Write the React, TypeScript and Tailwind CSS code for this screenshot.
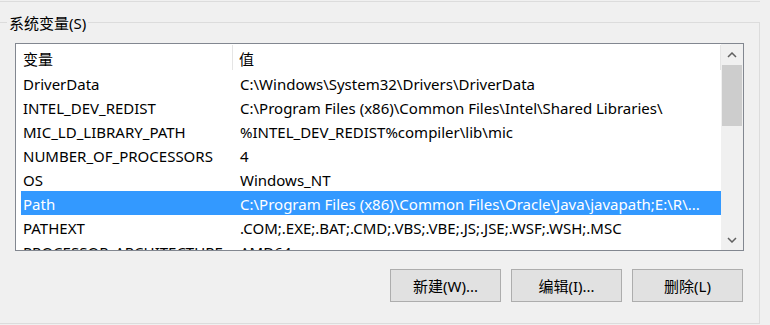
const rows = [
  { name: 'DriverData', value: 'C:\\Windows\\System32\\Drivers\\DriverData' },
  { name: 'INTEL_DEV_REDIST', value: 'C:\\Program Files (x86)\\Common Files\\Intel\\Shared Libraries\\' },
  { name: 'MIC_LD_LIBRARY_PATH', value: '%INTEL_DEV_REDIST%compiler\\lib\\mic' },
  { name: 'NUMBER_OF_PROCESSORS', value: '4' },
  { name: 'OS', value: 'Windows_NT' },
  { name: 'Path', value: 'C:\\Program Files (x86)\\Common Files\\Oracle\\Java\\javapath;E:\\R\\...', selected: true },
  { name: 'PATHEXT', value: '.COM;.EXE;.BAT;.CMD;.VBS;.VBE;.JS;.JSE;.WSF;.WSH;.MSC' },
  { name: 'PROCESSOR_ARCHITECTURE', value: 'AMD64' },
];

function Chevron({ down }: { down?: boolean }) {
  return (
    <svg width="10" height="6" viewBox="0 0 10 6" className="block">
      <path
        d={down ? 'M1 1 L5 5 L9 1' : 'M1 5 L5 1 L9 5'}
        fill="none"
        stroke="#606060"
        strokeWidth="1.5"
      />
    </svg>
  );
}

function Scrollbar() {
  return (
    <div className="flex w-[22px] flex-col bg-[#f0f0f0]">
      <div className="flex h-[21px] items-center justify-center">
        <Chevron />
      </div>
      <div className="mx-[1px] h-[61px] bg-[#cdcdcd]" />
      <div className="flex-1" />
      <div className="flex h-[21px] items-center justify-center">
        <Chevron down />
      </div>
    </div>
  );
}

function VarButton({ label }: { label: string }) {
  return (
    <button className="h-[33px] w-[111px] border border-[#adadad] bg-[#e1e1e1] pt-[1px] text-[15px] text-black">
      {label}
    </button>
  );
}

export default function App() {
  return (
    <div
      className="flex h-[325px] w-[770px] flex-col overflow-hidden bg-[#f0f0f0] text-black"
      style={{ fontFamily: '"Noto Sans", "Noto Sans CJK SC", sans-serif' }}
    >
      <div className="h-[2px] w-[760px] border-b border-[#dcdcdc]" />

      <div className="relative ml-[-1px] mt-[20px] h-[302px] w-[761px] border border-[#dcdcdc]">
        <span className="absolute left-[7px] top-[-10px] bg-[#f0f0f0] px-[2px] text-[15px] leading-[20px]">
          系统变量(S)
        </span>

        <div className="flex flex-col pl-[15px] pr-[15px] pt-[20px]">
          <div className="flex h-[208px] w-[729px] border border-[#828790] bg-white">
            <div className="flex flex-1 flex-col overflow-hidden text-[15px]">
              <div className="flex h-[27px] shrink-0 items-center">
                <div className="flex h-[25px] w-[217px] items-center border-r border-[#e5e5e5] pl-[7px] pt-[4px]">
                  变量
                </div>
                <div className="flex h-[25px] flex-1 items-center border-r border-[#e5e5e5] pl-[6px] pt-[4px]">
                  值
                </div>
              </div>
              {rows.map((row) => (
                <div
                  key={row.name}
                  className={
                    row.selected
                      ? 'ml-[5px] flex h-[24px] shrink-0 items-center whitespace-nowrap bg-[#3399ff] pt-[2px] text-white'
                      : 'ml-[5px] flex h-[24px] shrink-0 items-center whitespace-nowrap pt-[2px]'
                  }
                >
                  <div className="w-[217px] shrink-0 overflow-hidden pl-[2px]">{row.name}</div>
                  <div className="flex-1 overflow-hidden pl-[2px]">{row.value}</div>
                </div>
              ))}
            </div>
            <Scrollbar />
          </div>

          <div className="mt-[18px] flex justify-end gap-[10px] pr-[1px]">
            <VarButton label="新建(W)..." />
            <VarButton label="编辑(I)..." />
            <VarButton label="删除(L)" />
          </div>
        </div>
      </div>
    </div>
  );
}
